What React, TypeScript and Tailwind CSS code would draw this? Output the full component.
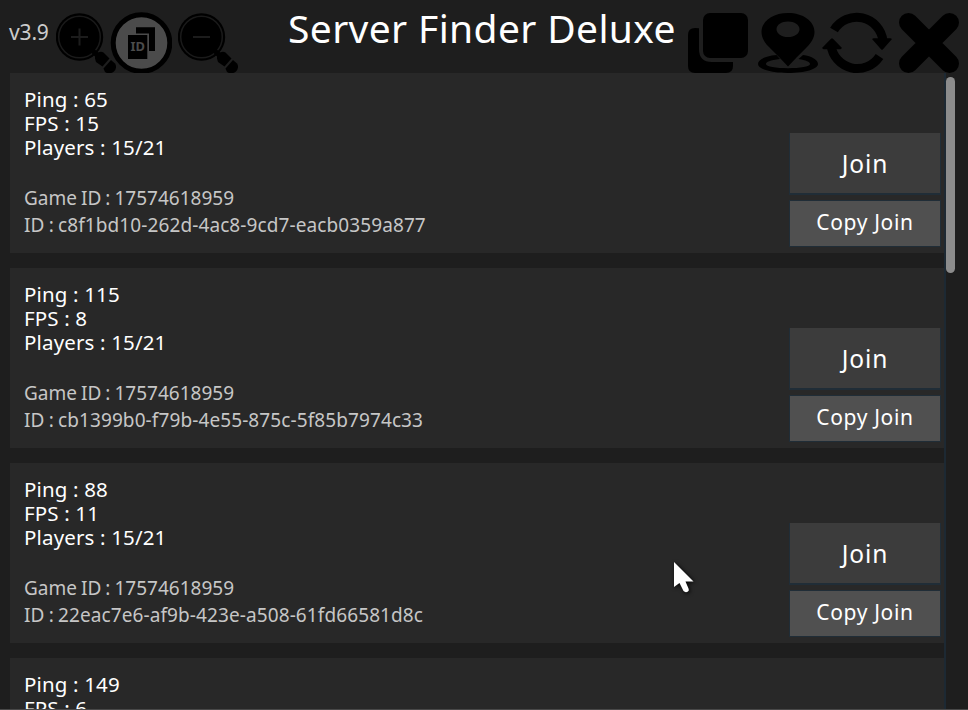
import React from "react";

const servers = [
  { ping: "65", fps: "15", id: "c8f1bd10-262d-4ac8-9cd7-eacb0359a877" },
  { ping: "115", fps: "8", id: "cb1399b0-f79b-4e55-875c-5f85b7974c33" },
  { ping: "88", fps: "11", id: "22eac7e6-af9b-423e-a508-61fd66581d8c" },
  { ping: "149", fps: "6", id: "" },
];

function Magnifier({ plus }: { plus?: boolean }) {
  return (
    <svg className="h-[60px] w-[60px] shrink-0" viewBox="0 0 60 60">
      <circle cx="23.5" cy="24" r="23.7" fill="#000" />
      <circle cx="23.5" cy="24" r="20.8" fill="none" stroke="#1a1a1a" strokeWidth="1.5" />
      <path d="M36 37L42 43" stroke="#000" strokeWidth="5" />
      <path d="M39 45.5Q38.500 42 42 39.500Q45 38 47.500 39.500L53.500 45.500L46.500 53.500L40 49Z" fill="#000" />
      <path d="M55 47L59 50.500Q61.500 54.500 58 58.500Q53 62 49 59L47.500 55.500Z" fill="#000" />
      <path d={plus ? "M15 24h17M23.500 15.500v17" : "M15 24h17"} stroke="#1c1c1c" strokeWidth="2" />
    </svg>
  );
}

function IdIcon() {
  return (
    <svg className="h-[62px] w-[62px] shrink-0" viewBox="0 0 62 62">
      <circle cx="31.500" cy="31" r="28.300" fill="#4b4b4b" stroke="#000" strokeWidth="5" />
      <path d="M26 15.300H45V39H39V21.500H26Z" fill="#000" />
      <path d="M18 23H37.300V47H18Z" fill="#000" />
      <text x="20.500" y="38.800" textLength="14.500" lengthAdjust="spacingAndGlyphs" className="text-[12.500px] font-bold" fill="#4b4b4b">ID</text>
    </svg>
  );
}

function Header() {
  return (
    <header className="flex h-[73px] items-start">
      <div className="ml-[9px] mt-[18px] w-[47px] text-[21px] leading-7 tracking-[-0.15px] text-[#cccccc]">v3.9</div>
      <div className="mt-[13px]"><Magnifier plus /></div>
      <div className="-ml-[6px] mt-[12px]"><IdIcon /></div>
      <div className="ml-[6px] mt-[13px]"><Magnifier /></div>
      <h1 className="-mt-px ml-[50px] w-[400px] whitespace-nowrap text-[39px] leading-[58px] tracking-[0.36px] text-white">Server Finder Deluxe</h1>
      <svg className="mt-[13px] h-[60px] w-[60px] shrink-0" viewBox="0 0 60 60">
        <rect x="15" width="45" height="45" rx="7" />
        <path d="M11 15.200V36Q11 49 24 49H45V53Q45 60 38 60H7Q0 60 0 53V22Q0 15 7 15Z" />
      </svg>
      <svg className="ml-[10px] mt-[13px] h-[60px] w-[60px] shrink-0" viewBox="0 0 60 60">
        <path fillRule="evenodd" d="M30 0C15 0 3.500 8 3.500 19C3.500 25 7 30 11 34L21 44L30 53.500L39 44L49 34C53 30 56.500 25 56.500 19C56.500 8 45 0 30 0ZM30 8.500C36.500 8.500 41.500 11.800 41.500 16.200S36.500 24 30 24S18.500 20.500 18.500 16.200S23.500 8.500 30 8.500Z" />
        <path d="M18.500 42C6 43 0 47 0 51C0 56 13 60 30 60S60 56 60 51C60 47 54 43 45 42L40.500 46C48 47 52 49 52 51C52 53.500 42 55.200 30 55.200S8 53.500 8 51C8 49 12 47 22 46Z" />
      </svg>
      <svg className="ml-[4px] mt-[12px] h-[62px] w-[70px] shrink-0" viewBox="0 0 70 62">
        <path d="M12 18A26.500 26.500 0 0 1 61 29" fill="none" stroke="#000" strokeWidth="9" />
        <path d="M57.500 44.500A26.500 26.500 0 0 1 9 33" fill="none" stroke="#000" strokeWidth="9" />
        <path d="M50 27L51.500 26.200H68.500L70 27L61 37.200Q60 38.300 59 37.200ZM0 36L1.500 37.200H18.500L20 36L11 26.800Q10 25.700 9 26.800Z" />
      </svg>
      <svg className="ml-[7px] mt-[13px] h-[60px] w-[60px] shrink-0" viewBox="0 0 60 60">
        <path d="M9.500 9.500L50.500 50.500M50.500 9.500L9.500 50.500" stroke="#000" strokeWidth="19" strokeLinecap="round" />
      </svg>
    </header>
  );
}

function Card({ ping, fps, id }: { ping: string; fps: string; id: string }) {
  return (
    <section className="flex h-[180px] w-[934px] shrink-0 justify-between bg-[#282828]">
      <div className="ml-[14px] pt-[14px]">
        <div className="text-[20.500px] leading-6 tracking-[0.15px] text-white">
          <p>Ping : {ping}</p>
          <p>FPS : {fps}</p>
          <p>Players : 15/21</p>
        </div>
        <div className="mt-[26px] text-[19px] leading-[27px] text-[#c6c6c6] [word-spacing:-0.9px]">
          <p>Game ID : 17574618959</p>
          <p className="tracking-[0.100px]">ID : {id}</p>
        </div>
      </div>
      <div className="mr-1 mt-[60px] flex w-[150px] flex-col text-white">
        <button className="h-[60px] bg-[#3c3c3c] text-[24.500px] leading-[61px] tracking-[0.900px] shadow-[0_1px_0_1px_#202d37]">Join</button>
        <button className="mt-2 h-[45px] bg-[#505050] pb-[2px] text-[21px] leading-[43px] tracking-[0.650px] shadow-[0_0_0_1px_#202d37]">Copy Join</button>
      </div>
    </section>
  );
}

export default function App() {
  return (
    <main className="relative h-[710px] w-[968px] overflow-hidden bg-[#1e1e1e] font-['Noto_Sans','Open_Sans',sans-serif]">
      <Header />
      <div className="ml-[10px] flex h-[636px] overflow-hidden">
        <div className="flex w-[936px] flex-col gap-[15px] border-r-2 border-[#1d2933]">
          {servers.map((s) => <Card key={s.ping} {...s} />)}
        </div>
        <div className="mt-1 h-[196px] w-[9px] rounded-full bg-[#8c8c8c]" />
      </div>
      <div className="h-px bg-[#484848]" />
      <svg className="absolute left-[668px] top-[557px] h-[44px] w-[32px]" viewBox="0 0 32 44">
        <path d="M6 5V30L11.500 26L15.500 34Q17.500 36 20 34.500Q21.500 33.500 20.500 31.500L17.500 24.500H25.500Z" fill="#fff" className="drop-shadow-[1px_1px_2px_#000]" />
      </svg>
    </main>
  );
}
